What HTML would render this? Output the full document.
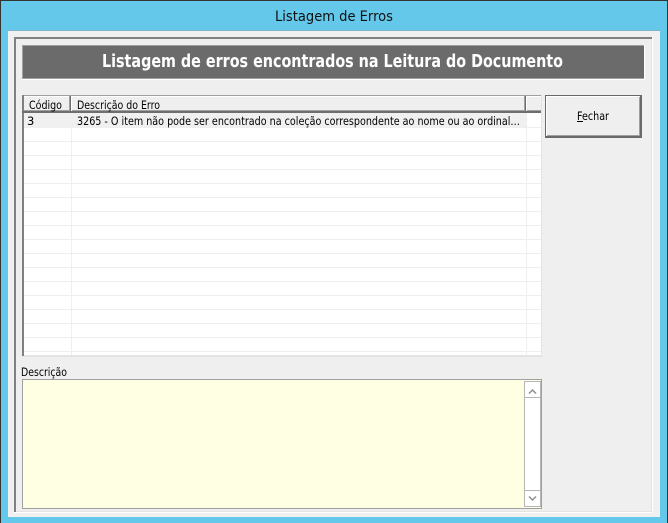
<!DOCTYPE html>
<html><head><meta charset="utf-8"><style>
html,body{margin:0;padding:0;background:#63c8ea;overflow:hidden}
svg{display:block}
text{font-family:"DejaVu Sans","Liberation Sans",sans-serif;fill:#000;white-space:pre}
</style></head><body>
<svg xmlns="http://www.w3.org/2000/svg" width="668" height="523" viewBox="0 0 668 523">
<g shape-rendering="crispEdges">
<rect width="668" height="523" fill="#63c8ea"/>
<rect width="668" height="1" fill="#333"/>
<rect width="1" height="523" fill="#333"/>
<rect x="667" width="1" height="523" fill="#333"/>
<rect x="8" y="30" width="652" height="1" fill="#7fb5cc"/>
<rect x="8" y="31" width="652" height="486" fill="#f0f0f0"/>
<!-- group -->
<rect x="14" y="37" width="639" height="476" fill="#fff"/>
<rect x="14" y="37" width="638" height="475" fill="#a0a0a0"/>
<rect x="14" y="37" width="638" height="2" fill="#808080"/>
<rect x="14" y="37" width="2" height="475" fill="#808080"/>
<rect x="16" y="39" width="636" height="473" fill="#efefef"/>
<rect x="651" y="39" width="1" height="473" fill="#e3e3e3"/>
<rect x="16" y="511" width="636" height="1" fill="#e3e3e3"/>
<!-- title bar -->
<rect x="22" y="45" width="623" height="35" fill="#fff"/>
<rect x="22" y="45" width="622" height="34" fill="#a0a0a0"/>
<rect x="23" y="46" width="621" height="32" fill="#6b6b6b"/>
<!-- grid -->
<rect x="22" y="95" width="520" height="262" fill="#e3e3e3"/>
<rect x="22" y="95" width="519" height="261" fill="#a0a0a0"/>
<rect x="22" y="95" width="2" height="261" fill="#808080"/>
<rect x="24" y="96" width="517" height="259" fill="#fff"/>
<rect x="24" y="96" width="517" height="16" fill="#efefef"/>
<rect x="24" y="96" width="517" height="1" fill="#fff"/>
<rect x="24" y="110" width="517" height="1" fill="#a0a0a0"/>
<rect x="22" y="111" width="519" height="2" fill="#6e6e6e"/>
<rect x="69" y="96" width="1" height="15" fill="#a0a0a0"/>
<rect x="70" y="96" width="1" height="15" fill="#6e6e6e"/>
<rect x="71" y="96" width="1" height="15" fill="#fff"/>
<rect x="524" y="96" width="1" height="15" fill="#a0a0a0"/>
<rect x="525" y="96" width="1" height="15" fill="#6e6e6e"/>
<rect x="526" y="96" width="1" height="15" fill="#fff"/>
<rect x="24" y="113" width="503" height="14" fill="#f0f0f0"/>
<g fill="#efefef">
<rect x="24" y="127" width="517" height="1"/><rect x="24" y="141" width="517" height="1"/>
<rect x="24" y="155" width="517" height="1"/><rect x="24" y="169" width="517" height="1"/>
<rect x="24" y="183" width="517" height="1"/><rect x="24" y="197" width="517" height="1"/>
<rect x="24" y="211" width="517" height="1"/><rect x="24" y="225" width="517" height="1"/>
<rect x="24" y="239" width="517" height="1"/><rect x="24" y="253" width="517" height="1"/>
<rect x="24" y="267" width="517" height="1"/><rect x="24" y="281" width="517" height="1"/>
<rect x="24" y="295" width="517" height="1"/><rect x="24" y="309" width="517" height="1"/>
<rect x="24" y="323" width="517" height="1"/><rect x="24" y="337" width="517" height="1"/>
<rect x="24" y="351" width="517" height="1"/>
<rect x="71" y="113" width="1" height="242"/><rect x="526" y="113" width="1" height="242"/>
</g>
<rect x="24" y="355" width="518" height="2" fill="#e3e3e3"/>
<rect x="541" y="95" width="1" height="262" fill="#e3e3e3"/>
<!-- button -->
<rect x="545" y="95" width="97" height="43" fill="#696969"/>
<rect x="546" y="96" width="94" height="40" fill="#fff"/>
<rect x="547" y="97" width="93" height="39" fill="#a0a0a0"/>
<rect x="547" y="97" width="92" height="38" fill="#efefef"/>
<rect x="577" y="121" width="6" height="1" fill="#000"/>
<!-- memo -->
<rect x="22" y="379" width="520" height="130" fill="#a0a0a0"/>
<rect x="23" y="380" width="518" height="128" fill="#ffffe4"/>
<rect x="524" y="381" width="17" height="126" fill="#b5b5b5"/>
<rect x="525" y="382" width="15" height="124" fill="#fff"/>
<rect x="525" y="397" width="15" height="1" fill="#b5b5b5"/>
<rect x="525" y="490" width="15" height="1" fill="#b5b5b5"/>
</g>
<path d="M529 393.5l3.5-3.5 3.5 3.5" fill="none" stroke="#8f8f8f" stroke-width="1.5"/>
<path d="M529 496.5l3.5 3.5 3.5-3.5" fill="none" stroke="#8f8f8f" stroke-width="1.5"/>
<text x="275" y="21" font-size="14" textLength="118" lengthAdjust="spacingAndGlyphs" style="fill:#111">Listagem de Erros</text>
<text x="102" y="67" font-size="17.5" font-weight="700" textLength="461" lengthAdjust="spacingAndGlyphs" style="fill:#fff">Listagem de erros encontrados na Leitura do Documento</text>
<text x="29" y="109" font-size="11.5" textLength="33" lengthAdjust="spacingAndGlyphs">Código</text>
<text x="77" y="109" font-size="11.5" textLength="83" lengthAdjust="spacingAndGlyphs">Descrição do Erro</text>
<text x="27" y="125" font-size="11.5">3</text>
<text x="77" y="125" font-size="11.5" textLength="443" lengthAdjust="spacingAndGlyphs">3265 - O item não pode ser encontrado na coleção correspondente ao nome ou ao ordinal…</text>
<text x="577" y="120" font-size="11.5" textLength="32" lengthAdjust="spacingAndGlyphs">Fechar</text>
<text x="21" y="376" font-size="11.5" textLength="46" lengthAdjust="spacingAndGlyphs">Descrição</text>
</svg>
</body></html>
